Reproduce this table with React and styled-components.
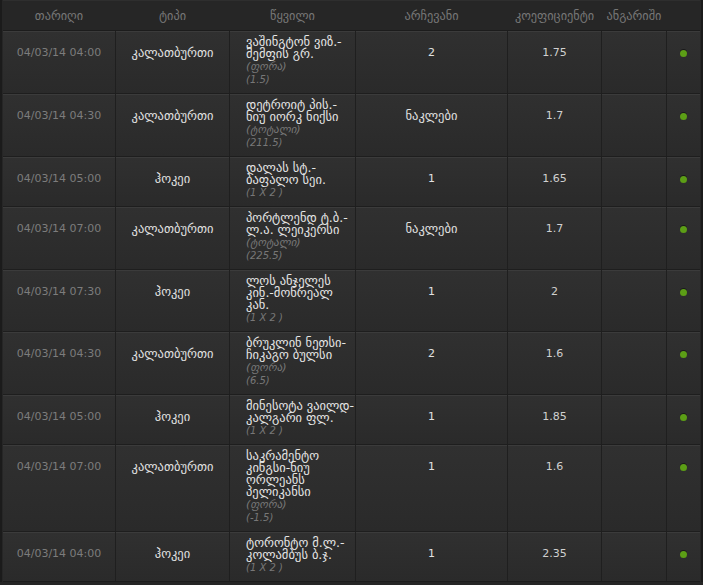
import styled, { createGlobalStyle } from 'styled-components';

const GlobalStyle = createGlobalStyle`
    html, body {
        margin: 0;
        padding: 0;
        background: #252525;
    }
    body {
        font-family: "DejaVu Sans", "Noto Sans", sans-serif;
        font-size: 11px;
    }
`;

// event names are kept as the lines they break into on the original page
const bets = [
    { date: '04/03/14 04:00', sport: 'კალათბურთი', event: ['ვაშინგტონ ვიზ.-', 'მემფის გრ.'], notes: ['(ფორა)', '(1.5)'], pick: '2', odds: '1.75' },
    { date: '04/03/14 04:30', sport: 'კალათბურთი', event: ['დეტროიტ პის.-', 'ნიუ იორკ ნიქსი'], notes: ['(ტოტალი)', '(211.5)'], pick: 'ნაკლები', odds: '1.7' },
    { date: '04/03/14 05:00', sport: 'ჰოკეი', event: ['დალას სტ.-', 'ბაფალო სეი.'], notes: ['(1 X 2 )'], pick: '1', odds: '1.65' },
    { date: '04/03/14 07:00', sport: 'კალათბურთი', event: ['პორტლენდ ტ.ბ.-', 'ლ.ა. ლეიკერსი'], notes: ['(ტოტალი)', '(225.5)'], pick: 'ნაკლები', odds: '1.7' },
    { date: '04/03/14 07:30', sport: 'ჰოკეი', event: ['ლოს ანჯელეს', 'კინ.-მონრეალ', 'კან.'], notes: ['(1 X 2 )'], pick: '1', odds: '2' },
    { date: '04/03/14 04:30', sport: 'კალათბურთი', event: ['ბრუკლინ ნეთსი-', 'ჩიკაგო ბულსი'], notes: ['(ფორა)', '(6.5)'], pick: '2', odds: '1.6' },
    { date: '04/03/14 05:00', sport: 'ჰოკეი', event: ['მინესოტა ვაილდ-', 'კალგარი ფლ.'], notes: ['(1 X 2 )'], pick: '1', odds: '1.85' },
    { date: '04/03/14 07:00', sport: 'კალათბურთი', event: ['საკრამენტო', 'კინგსი-ნიუ', 'ორლეანს', 'პელიკანსი'], notes: ['(ფორა)', '(-1.5)'], pick: '1', odds: '1.6' },
    { date: '04/03/14 04:00', sport: 'ჰოკეი', event: ['ტორონტო მ.ლ.-', 'კოლამბუს ბ.ჯ.'], notes: ['(1 X 2 )'], pick: '1', odds: '2.35' },
];

const headings = ['თარიღი', 'ტიპი', 'წყვილი', 'არჩევანი', 'კოეფიციენტი', 'ანგარიში', ''];

// georgian glyphs come out narrower than in the original, so they get a bigger size
const isGeo = text => /[\u10A0-\u10FF]/.test(text);

export default function App() {
    return (
        <>
            <GlobalStyle />
            <Table>
                <HeadRow>
                    {headings.map((h, i) => (
                        <HeadCell key={i}>{h}</HeadCell>
                    ))}
                </HeadRow>
                <Body>
                    {bets.map((bet, i) => (
                        <Row key={i}>
                            <DateCell>{bet.date}</DateCell>
                            <Cell $geo>{bet.sport}</Cell>
                            <EventCell>
                                {bet.event.map((line, j) => (
                                    <EventLine key={j}>{line}</EventLine>
                                ))}
                                {bet.notes.map((n, j) => (
                                    <Note key={j} $geo={isGeo(n)}>{n}</Note>
                                ))}
                            </EventCell>
                            <Cell $geo={isGeo(bet.pick)}>{bet.pick}</Cell>
                            <Cell $soft>{bet.odds}</Cell>
                            <Cell />
                            <Cell>
                                <Status />
                            </Cell>
                        </Row>
                    ))}
                </Body>
            </Table>
        </>
    );
}

const columns = '112px 113px 125px 151px 93px 64px 33px';

const Table = styled.div`
    width: 697px;
    border-left: 2px solid #1b1b1b;
    border-right: 2px solid #1b1b1b;
    padding: 0 1px;
    background: #262626;
`;

const HeadRow = styled.div`
    display: grid;
    grid-template-columns: ${columns};
    column-gap: 1px;
    box-sizing: border-box;
    height: 31px;
    border-top: 1px solid #2e2e2e;
    border-bottom: 1px solid #1c1c1c;
`;

const HeadCell = styled.div`
    display: flex;
    align-items: center;
    justify-content: center;
    color: #777;
    font-size: 12.3px;
    white-space: nowrap;
`;

const Body = styled.div`
    display: flex;
    flex-direction: column;
    gap: 1px;
    background: #1e1e1e;
    border-bottom: 1px solid #1c1c1c;
`;

const Row = styled.div`
    display: grid;
    grid-template-columns: ${columns};
    column-gap: 1px;
    background: #1f1f1f;
`;

const Cell = styled.div`
    background: linear-gradient(#303030, #2a2a2a);
    border-top: 1px solid #3b3b3b;
    padding: 14px 4px 5px;
    text-align: center;
    color: ${p => (p.$soft ? '#d0d0d0' : '#e2e2e2')};
    font-size: ${p => (p.$geo ? '12.5px' : '11px')};
    line-height: 13px;
`;

const DateCell = styled(Cell)`
    color: #7c7c7c;
`;

const EventCell = styled(Cell)`
    text-align: left;
    padding: 4px 0 7px 16px;
`;

const EventLine = styled.div`
    color: #e6e6e6;
    font-size: 12.5px;
    line-height: 12px;
    white-space: nowrap;
`;

const Note = styled.div`
    color: #777;
    font-size: ${p => (p.$geo ? '11px' : '10px')};
    font-style: italic;
    line-height: 13px;
`;

const Status = styled.span`
    display: block;
    width: 7px;
    height: 7px;
    margin: 4px auto 0;
    border-radius: 50%;
    background: #5c9e16;
    box-shadow: 0 -1px 0 #1a1a1a;
`;
